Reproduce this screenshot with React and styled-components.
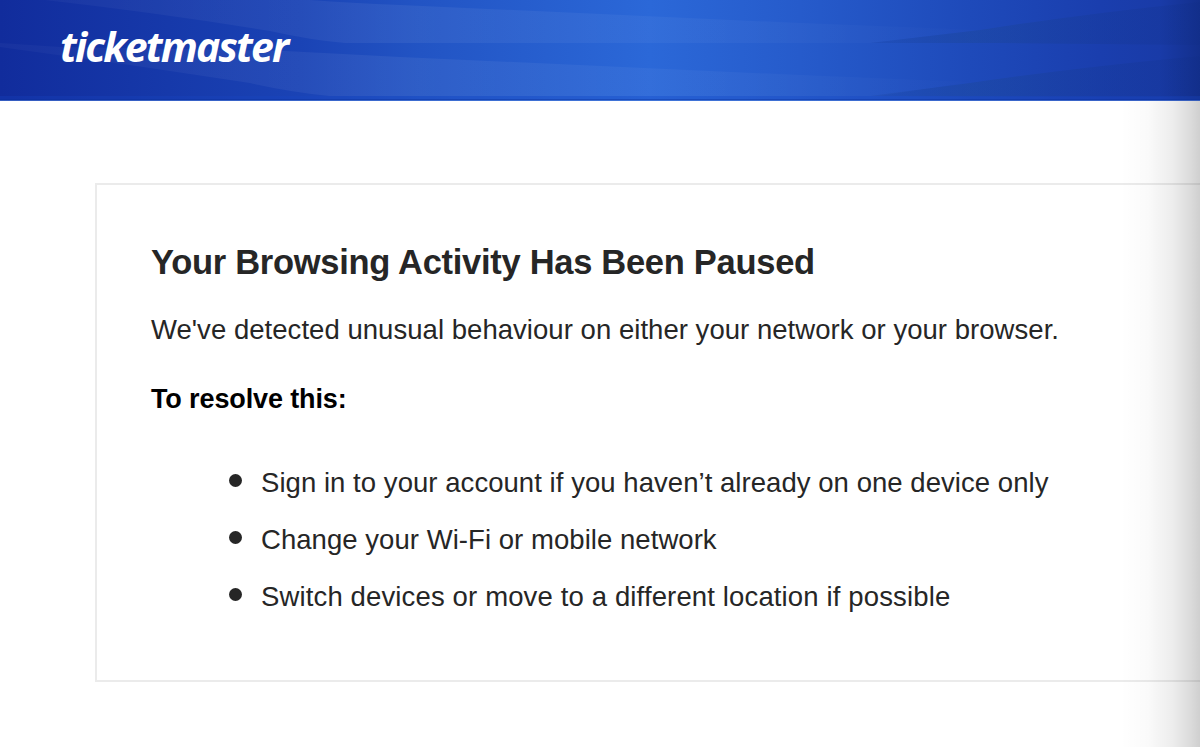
import React from "react";
import styled, { createGlobalStyle } from "styled-components";

const GlobalStyle = createGlobalStyle`
  * {
    box-sizing: border-box;
  }

  body {
    margin: 0;
    overflow: hidden;
    background: #fff;
    font-family: "Liberation Sans", Helvetica, Arial, sans-serif;
  }
`;

const Page = styled.div`
  position: relative;
  width: 100%;
  height: 100vh;
  overflow: hidden;
`;

const Header = styled.header`
  position: relative;
  height: 101px;
  padding: 21px 0 0 60px;
  background: linear-gradient(
    90deg,
    #112c9c 0,
    #1a43b5 300px,
    #2254c4 420px,
    #2b68d8 650px,
    #265bcb 800px,
    #1e4aba 970px,
    #1a3eae 1100px,
    #193ba8 1160px,
    #132f8c 1200px
  );
`;

const Waves = styled.svg`
  position: absolute;
  inset: 0;
`;

const Logo = styled.div`
  position: relative;
  color: #fff;
  font-family: "Open Sans", "Noto Sans", sans-serif;
  font-size: 41px;
  font-style: italic;
  font-weight: 700;
  line-height: 50px;
  letter-spacing: -1.85px;
`;

const Card = styled.main`
  width: 1200px;
  height: 499px;
  margin: 82px 0 0 95px;
  padding: 57px 0 0 54px;
  border: 2px solid #ebebeb;
  color: #262626;
  white-space: nowrap;
`;

const Title = styled.h1`
  margin: 0;
  font-size: 34.5px;
  line-height: 40px;
  letter-spacing: -0.29px;
`;

const Text = styled.p`
  margin: 28px 0 0;
  font-size: 27.5px;
  line-height: 40px;
  letter-spacing: 0.04px;
`;

const Subtitle = styled.h2`
  margin: 29px 0 0;
  color: #000;
  font-size: 27px;
  line-height: 40px;
  letter-spacing: -0.12px;
`;

const Steps = styled.ul`
  margin: 35px 0 0;
  padding: 0 0 0 78px;
  list-style: none;
`;

const Step = styled.li`
  display: flex;
  align-items: center;
  gap: 19px;
  font-size: 27.5px;
  line-height: 57px;
  letter-spacing: ${({ $tracking }) => $tracking}px;

  &::before {
    content: "";
    width: 13px;
    height: 13px;
    margin-bottom: 4px;
    border-radius: 50%;
    background: #262626;
  }
`;

const EdgeShadow = styled.div`
  position: absolute;
  top: 101px;
  right: 0;
  bottom: 0;
  width: 80px;
  background: linear-gradient(
    90deg,
    rgba(0, 0, 0, 0) 0%,
    rgba(0, 0, 0, 0.02) 35%,
    rgba(0, 0, 0, 0.07) 65%,
    rgba(0, 0, 0, 0.14) 88%,
    rgba(0, 0, 0, 0.19) 100%
  );
`;

const steps = [
  {
    text: "Sign in to your account if you haven’t already on one device only",
    tracking: 0.05,
  },
  { text: "Change your Wi-Fi or mobile network", tracking: 0.05 },
  {
    text: "Switch devices or move to a different location if possible",
    tracking: 0.14,
  },
];

const HeaderWaves = () => (
  <Waves width="1200" height="101" viewBox="0 0 1200 101">
    <defs>
      <linearGradient id="light" gradientUnits="userSpaceOnUse" x1="40" x2="1020">
        <stop offset="0" stopColor="#fff" stopOpacity="0.03" />
        <stop offset="0.35" stopColor="#fff" stopOpacity="0.06" />
        <stop offset="0.7" stopColor="#fff" stopOpacity="0.035" />
        <stop offset="1" stopColor="#fff" stopOpacity="0" />
      </linearGradient>
      <linearGradient id="dark" gradientUnits="userSpaceOnUse" x1="870" x2="1200">
        <stop offset="0" stopColor="#0d2a70" stopOpacity="0.1" />
        <stop offset="0.3" stopColor="#1c4580" stopOpacity="0.25" />
        <stop offset="1" stopColor="#0d2a80" stopOpacity="0.15" />
      </linearGradient>
    </defs>
    <path
      d="M45 0H310Q350 3 400 5L800 23L980 30L870 43H345Q310 40 270 31Q160 13 45 0Z"
      fill="url(#light)"
    />
    <path
      d="M0 43L60 47L285 51L400 57L800 75L970 82L880 96H330Q290 92 250 83L130 65L0 47Z"
      fill="url(#light)"
    />
    <path d="M870 43L980 30Q1090 13 1200 2V45L1000 43Z" fill="url(#dark)" />
    <path d="M870 96L970 83Q1080 67 1200 56V97Z" fill="url(#dark)" />
    <rect y="96" width="1200" height="4" fill="#1648c8" opacity="0.25" />
    <rect y="99" width="1200" height="1" fill="#0b2f98" opacity="0.4" />
    <rect y="100" width="1200" height="1" fill="#4f7dd8" opacity="0.6" />
  </Waves>
);

const App = () => {
  return (
    <>
      <GlobalStyle />
      <Page>
        <Header>
          <HeaderWaves />
          <Logo>ticketmaster</Logo>
        </Header>
        <Card>
          <Title>Your Browsing Activity Has Been Paused</Title>
          <Text>
            We've detected unusual behaviour on either your network or your
            browser.
          </Text>
          <Subtitle>To resolve this:</Subtitle>
          <Steps>
            {steps.map(({ text, tracking }) => (
              <Step key={text} $tracking={tracking}>
                {text}
              </Step>
            ))}
          </Steps>
        </Card>
        <EdgeShadow />
      </Page>
    </>
  );
};

export default App;
